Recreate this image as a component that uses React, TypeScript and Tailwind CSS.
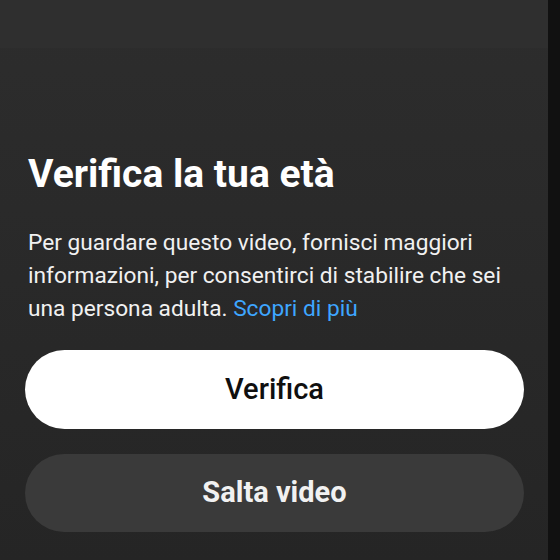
export default function App() {
  return (
    <div className="flex h-[560px] w-[560px] bg-[#111111] font-['Roboto',sans-serif]">
      <div className="flex w-[548px] flex-col bg-gradient-to-b from-[#2d2d2d] to-[#252525]">
        <div className="h-[48px] bg-[#2f2f2f]" />
        <div className="flex flex-1 flex-col px-[25px] pt-[103px]">
          <h1 className="pl-[3px] text-[39px] font-bold leading-[46px] text-white">Verifica la tua età</h1>
          <p className="mt-[29px] pl-[3px] pr-[20px] text-[22.7px] leading-[33px] text-[#f1f1f1]">
            Per guardare questo video, fornisci maggiori informazioni, per consentirci di stabilire che sei una
            persona adulta. <span className="text-[#3ea6ff]">Scopri di più</span>
          </p>
          <button className="mt-[25px] h-[79px] w-[499px] rounded-full bg-white text-[29px] font-medium text-[#0f0f0f]">
            Verifica
          </button>
          <button className="mt-[25px] h-[78px] w-[499px] rounded-full bg-[#3a3a3a] text-[29px] font-bold text-[#f1f1f1]">
            Salta video
          </button>
        </div>
      </div>
    </div>
  );
}
